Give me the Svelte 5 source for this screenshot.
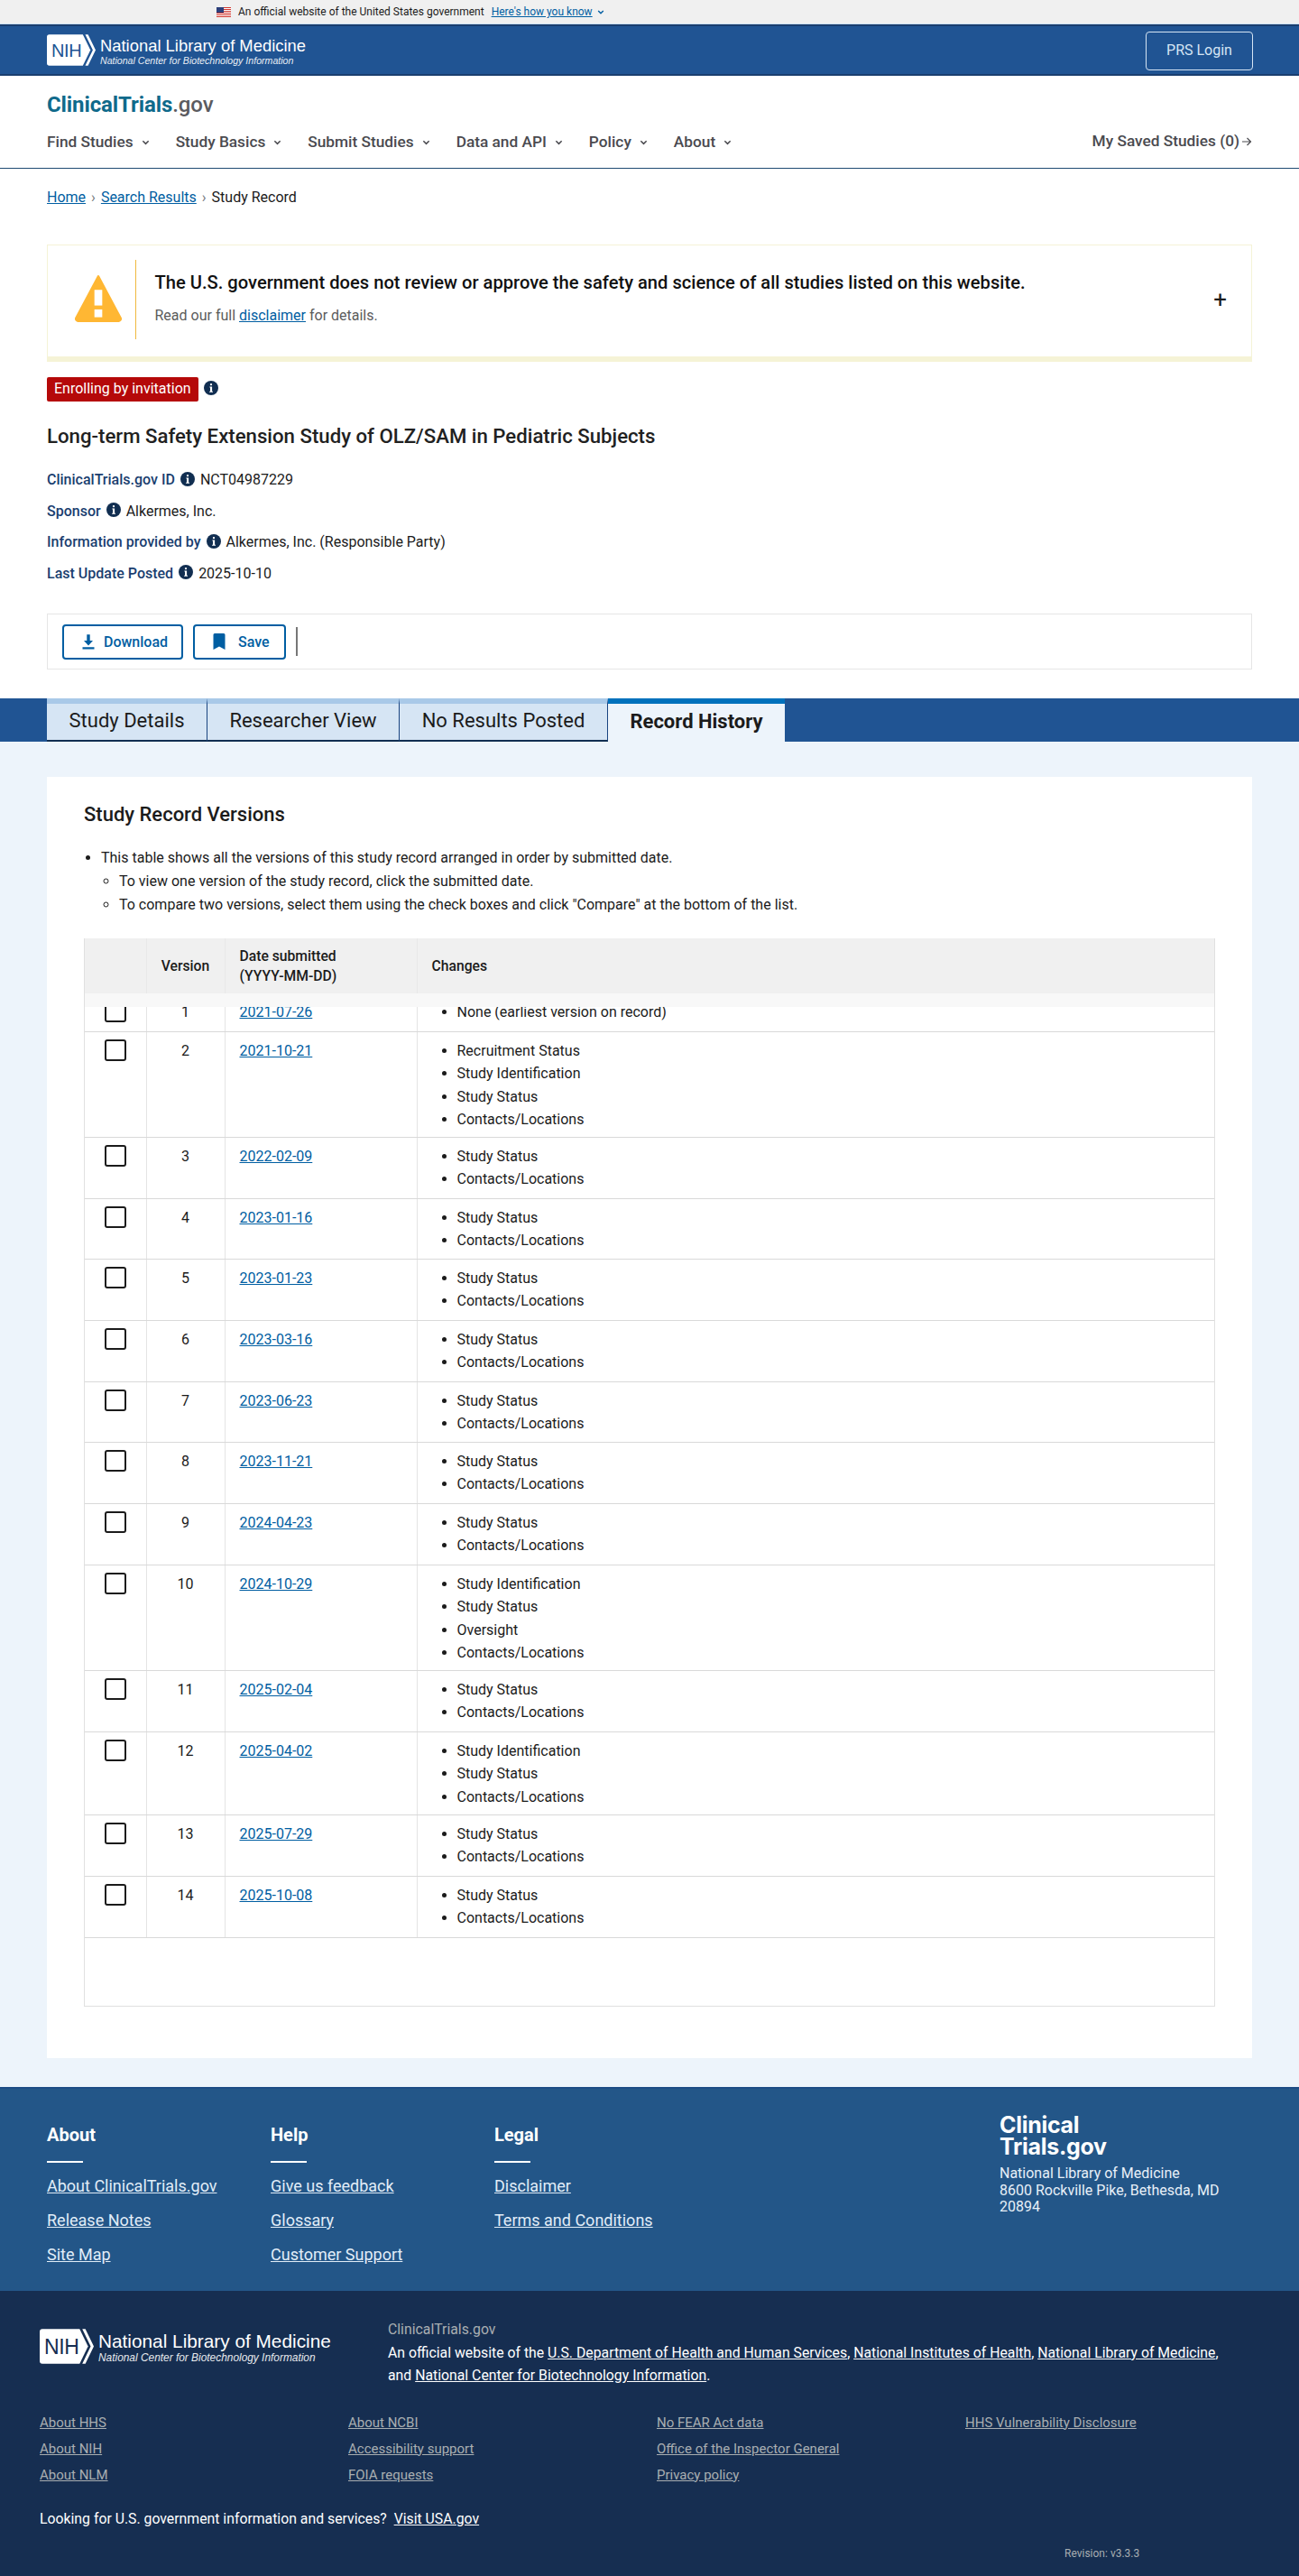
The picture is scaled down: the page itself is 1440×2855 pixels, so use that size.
<script>
  const navItems = ['Find Studies', 'Study Basics', 'Submit Studies', 'Data and API', 'Policy', 'About'];
  const meta = [
    ['ClinicalTrials.gov ID', 'NCT04987229'],
    ['Sponsor', 'Alkermes, Inc.'],
    ['Information provided by', 'Alkermes, Inc. (Responsible Party)'],
    ['Last Update Posted', '2025-10-10']
  ];
  const tabs = ['Study Details', 'Researcher View', 'No Results Posted'];
  const SC = ['Study Status', 'Contacts/Locations'];
  const rows = [
    ['2021-07-26', ['None (earliest version on record)']],
    ['2021-10-21', ['Recruitment Status', 'Study Identification', 'Study Status', 'Contacts/Locations']],
    ['2022-02-09', SC],
    ['2023-01-16', SC],
    ['2023-01-23', SC],
    ['2023-03-16', SC],
    ['2023-06-23', SC],
    ['2023-11-21', SC],
    ['2024-04-23', SC],
    ['2024-10-29', ['Study Identification', 'Study Status', 'Oversight', 'Contacts/Locations']],
    ['2025-02-04', SC],
    ['2025-04-02', ['Study Identification', 'Study Status', 'Contacts/Locations']],
    ['2025-07-29', SC],
    ['2025-10-08', SC]
  ];
  const footCols = [
    ['About', ['About ClinicalTrials.gov', 'Release Notes', 'Site Map']],
    ['Help', ['Give us feedback', 'Glossary', 'Customer Support']],
    ['Legal', ['Disclaimer', 'Terms and Conditions']]
  ];
  const govCols = [
    ['About HHS', 'About NIH', 'About NLM'],
    ['About NCBI', 'Accessibility support', 'FOIA requests'],
    ['No FEAR Act data', 'Office of the Inspector General', 'Privacy policy'],
    ['HHS Vulnerability Disclosure']
  ];
</script>

{#snippet info()}
  <svg class="info" viewBox="0 0 16 16" aria-hidden="true">
    <circle cx="8" cy="8" r="8" fill="#112e51" />
    <rect x="6.9" y="3" width="2.2" height="2.2" rx="1" fill="#fff" />
    <path d="M6.4 6.5h2.7v5.2h.9v1.1H6.1v-1.1h.9V7.6h-.6z" fill="#fff" />
  </svg>
{/snippet}

{#snippet chevron()}
  <svg class="chev" viewBox="0 0 10 6" aria-hidden="true">
    <path d="M1.5 1 5 4.5 8.5 1" fill="none" stroke="currentColor" stroke-width="1.7" />
  </svg>
{/snippet}

{#snippet nihLogo()}
  <div class="nihlogo">
    <svg class="nihmark" viewBox="0 0 61 39" aria-hidden="true">
      <path d="M3 0h42l9.500 19.500L45 39H3a3 3 0 0 1-3-3V3a3 3 0 0 1 3-3z" fill="#fff" />
      <path d="M48 0h3.500L61 19.500 51.500 39H48l9.500-19.500z" fill="#fff" />
    </svg>
    <span class="nihword">NIH</span>
    <div class="nihtext">
      <div class="nlm">National Library of Medicine</div>
      <div class="ncbi">National Center for Biotechnology Information</div>
    </div>
  </div>
{/snippet}

<div class="page">
  <div class="gov">
    <svg class="flag" viewBox="0 0 16 11" aria-hidden="true">
      <rect width="16" height="11" fill="#fff" />
      <path d="M0 0h16v1H0zM0 2h16v1H0zM0 4h16v1H0zM0 6h16v1H0zM0 8h16v1H0zM0 10h16v1H0z" fill="#d0342c" />
      <rect width="8" height="6" fill="#2c3f7a" />
    </svg>
    <span>An official website of the United States government</span>
    <a href="#x" class="govlink">Here's how you know</a>
    <span class="govchev">{@render chevron()}</span>
  </div>

  <div class="nih">
    {@render nihLogo()}
    <a href="#x" class="prs">PRS Login</a>
  </div>

  <header class="site">
    <div class="brand"><span class="ct">ClinicalTrials</span><span class="dotgov">.gov</span></div>
    <nav class="nav">
      <div class="navitems">
        {#each navItems as n}
          <a href="#x" class="navitem">{n}{@render chevron()}</a>
        {/each}
      </div>
      <a href="#x" class="saved">My Saved Studies (0)
        <svg class="arrow" viewBox="0 0 12 12" aria-hidden="true"><path d="M1 6h9.500M6.500 2l4 4-4 4" fill="none" stroke="currentColor" stroke-width="1.200" /></svg>
      </a>
    </nav>
  </header>

  <div class="crumbs">
    <a href="#x">Home</a><span class="sep">›</span><a href="#x">Search Results</a><span class="sep">›</span><span>Study Record</span>
  </div>

  <section class="warn">
    <svg class="tri" viewBox="2 2 48 48" aria-hidden="true">
      <path d="M26 3 49 46a2.500 2.500 0 0 1-2 3H5a2.500 2.500 0 0 1-2-3z" fill="#ffb733" stroke="#ffb733" stroke-width="2" stroke-linejoin="round" />
      <rect x="22" y="17" width="8" height="16" fill="#fff" />
      <rect x="22" y="37" width="8" height="8" fill="#fff" />
    </svg>
    <div class="warnbar"></div>
    <div class="warntext">
      <div class="warnhead">The U.S. government does not review or approve the safety and science of all studies listed on this website.</div>
      <div class="warnsub">Read our full <a href="#x">disclaimer</a> for details.</div>
    </div>
    <div class="plus">+</div>
  </section>

  <div class="status"><span class="badge">Enrolling by invitation</span>{@render info()}</div>

  <h1 class="title">Long-term Safety Extension Study of OLZ/SAM in Pediatric Subjects</h1>

  <div class="meta">
    {#each meta as m}
      <div class="metarow"><span class="metalabel">{m[0]}</span>{@render info()}<span>{m[1]}</span></div>
    {/each}
  </div>

  <div class="tools">
    <button class="btn dl">
      <svg viewBox="0 0 16 16" aria-hidden="true" preserveAspectRatio="none"><path d="M6.300 1h3.400v6H13L8 12 3 7h3.300zM1.500 13.600h13V15.500h-13z" fill="currentColor" /></svg>
      Download
    </button>
    <button class="btn sv">
      <svg viewBox="0 0 16 20" aria-hidden="true"><path d="M1.500 2.500A1.500 1.500 0 0 1 3 1h10a1.500 1.500 0 0 1 1.500 1.500V19L8 15.500 1.500 19z" fill="currentColor" /></svg>
      Save
    </button>
    <div class="toolsep"></div>
  </div>

  <div class="tabband">
    {#each tabs as t}
      <a href="#x" class="tab">{t}</a>
    {/each}
    <a href="#x" class="tab active">Record History</a>
  </div>

  <main class="main">
    <section class="card">
      <h2>Study Record Versions</h2>
      <ul class="intro">
        <li>This table shows all the versions of this study record arranged in order by submitted date.
          <ul>
            <li>To view one version of the study record, click the submitted date.</li>
            <li>To compare two versions, select them using the check boxes and click "Compare" at the bottom of the list.</li>
          </ul>
        </li>
      </ul>
      <div class="tablewrap">
        <table>
          <colgroup><col class="c1" /><col class="c2" /><col class="c3" /><col /></colgroup>
          <thead>
            <tr>
              <th></th>
              <th class="ctr">Version</th>
              <th>Date submitted<br />(YYYY-MM-DD)</th>
              <th>Changes</th>
            </tr>
          </thead>
          <tbody>
            {#each rows as r, i}
              <tr class={'n' + r[1].length}>
                <td><span class="check"></span></td>
                <td class="ctr">{i + 1}</td>
                <td><a href="#x">{r[0]}</a></td>
                <td>
                  <ul class="changes">
                    {#each r[1] as c}<li>{c}</li>{/each}
                  </ul>
                </td>
              </tr>
            {/each}
          </tbody>
        </table>
        <div class="strip"></div>
      </div>
    </section>
  </main>

  <footer class="foot">
    <div class="footcols">
      {#each footCols as col}
        <div class="footcol">
          <div class="foothead">{col[0]}</div>
          <div class="footrule"></div>
          {#each col[1] as l}<a href="#x">{l}</a>{/each}
        </div>
      {/each}
    </div>
    <div class="footaddr">
      <div class="footlogo">Clinical<br />Trials.gov</div>
      <div class="addr">National Library of Medicine<br />8600 Rockville Pike, Bethesda, MD<br />20894</div>
    </div>
  </footer>

  <footer class="dark">
    <div class="darktop">
      <div class="darklogo">{@render nihLogo()}</div>
      <div class="darkabout">
        <div class="muted">ClinicalTrials.gov</div>
        <div>An official website of the <a href="#x">U.S. Department of Health and Human Services</a>, <a href="#x">National Institutes of Health</a>, <a href="#x">National Library of Medicine</a>,</div>
        <div>and <a href="#x">National Center for Biotechnology Information</a>.</div>
      </div>
    </div>
    <div class="darklinks">
      {#each govCols as col}
        <div class="darkcol">
          {#each col as l}<a href="#x">{l}</a>{/each}
        </div>
      {/each}
    </div>
    <div class="looking">Looking for U.S. government information and services? &nbsp;<a href="#x">Visit USA.gov</a></div>
    <div class="rev">Revision: v3.3.3</div>
  </footer>
</div>

<style>
  :global(body) { margin: 0; background: #fff; }
  :global(*) { box-sizing: border-box; }
  .page { font-family: Roboto, "Liberation Sans", sans-serif; font-size: 16px; color: #1b1b1b; width: 1440px; line-height: 1.6; }
  a { color: #005ea2; }

  .gov { height: 27px; background: #f0f0f0; border-bottom: 1px solid #cfe2f3; display: flex; align-items: center; padding-left: 240px; font-size: 12px; line-height: 1; }
  .flag { width: 16px; height: 11px; margin-right: 8px; }
  .govlink { margin-left: 8px; }
  .govchev { margin-left: 5px; color: #005ea2; display: flex; }
  .govchev .chev { width: 8px; height: 5px; margin: 0; }

  .nih { height: 57px; background: #205493; border-top: 2px solid #1a3e6f; border-bottom: 2px solid #1a3e6f; padding: 0 51px 0 52px; display: flex; align-items: center; justify-content: space-between; }
  .nihlogo { position: relative; display: flex; align-items: center; color: #fff; }
  .nihmark { width: 54px; height: 35px; display: block; }
  .nihword { position: absolute; left: 5px; top: 50%; transform: translateY(-50%); font-family: "Liberation Sans", sans-serif; font-size: 20px; color: #205493; letter-spacing: -0.4px; line-height: 1; }
  .nihtext { margin-left: 5px; padding-top: 4px; line-height: 1; }
  .nlm { font-family: "Liberation Sans", sans-serif; font-size: 18.400px; }
  .ncbi { font-family: "Liberation Sans", sans-serif; font-size: 10.600px; font-style: italic; margin-top: 2px; opacity: 0.9; }
  .prs { width: 119px; height: 43px; border: 1px solid #d6e5f4; border-radius: 4px; color: #d6e5f4; display: flex; align-items: center; justify-content: center; text-decoration: none; margin-top: 1px; }

  .site { height: 103px; border-bottom: 1px solid #1f4a72; padding: 0 52px; }
  .brand { padding-top: 15px; height: 61px; font-size: 24px; font-weight: 700; line-height: 34px; letter-spacing: -0.1px; }
  .ct { color: #0f6a8b; }
  .dotgov { color: #5b5b5f; font-weight: 500; }
  .nav { display: flex; justify-content: space-between; align-items: center; height: 25px; font-size: 17.280px; }
  .navitems { display: flex; gap: 0; }
  .navitem { color: #4a4a4f; font-weight: 500; text-decoration: none; display: flex; align-items: center; margin-right: 29px; }
  .chev { width: 9px; height: 6px; margin-left: 9px; }
  .saved { color: #4a4a4f; font-weight: 500; text-decoration: none; display: flex; align-items: center; margin-top: -2px; }
  .arrow { width: 12px; height: 12px; margin-left: 2px; }

  .crumbs { padding: 19px 52px 0; height: 84px; font-size: 16px; display: flex; align-items: flex-start; }
  .sep { color: #71767a; margin: 0 6px; }

  .warn { margin: 0 52px; height: 130px; border: 1px solid #f5f3d6; border-bottom: 6px solid #f5f3d6; display: flex; align-items: center; padding: 0 27px 4px 30px; position: relative; }
  .tri { width: 52px; height: 52px; margin-top: -2px; }
  .warnbar { width: 1px; height: 88px; background: #f0b93f; margin: 0 20.500px 0 15px; }
  .warntext { flex: 1; }
  .warnhead { font-size: 20.150px; font-weight: 500; color: #111; line-height: 26px; margin-top: -1px; }
  .warnsub { color: #5c5c5c; margin-top: 11px; line-height: 26px; }
  .plus { font-size: 26px; line-height: 1; }

  .status { margin: 17px 52px 0; display: flex; align-items: flex-start; }
  .badge { background: #b50909; color: #fff; border-radius: 2px; height: 27px; line-height: 26px; padding: 0 8px; font-size: 16px; }
  .info { width: 16px; height: 16px; flex: none; margin: 4px 6px 0; }

  .title { margin: 21px 52px 0; font-size: 22.200px; font-weight: 500; line-height: 34px; color: #212121; }

  .meta { margin: 15px 52px 0; }
  .metarow { height: 34.500px; display: flex; align-items: center; }
  .metarow .info { margin: -3px 6px 0; }
  .metalabel { color: #1a3e6f; font-weight: 500; }

  .tools { margin: 27px 52px 0; height: 62px; border: 1px solid #e6e6e6; display: flex; align-items: center; padding-left: 16px; gap: 11px; }
  .btn { font: 500 16px Roboto, sans-serif; color: #005ea2; background: #fff; border: 2px solid #005ea2; border-radius: 4px; height: 39px; display: flex; align-items: center; justify-content: center; gap: 9px; padding: 0; }
  .btn svg { fill: currentColor; }
  .dl { width: 134px; padding-left: 4px; }
  .dl svg { width: 16px; height: 18px; }
  .sv { width: 103px; gap: 12.500px; padding-left: 3px; }
  .sv svg { width: 16px; height: 20px; }
  .toolsep { width: 2px; height: 32px; background: #777; }

  .tabband { margin-top: 32px; height: 48px; background: #205493; display: flex; padding-left: 52px; }
  .tab { background: #d6e5f4; border-top: 6px solid #a9c9e8; border-bottom: 2px solid #112e51; border-right: 1px solid #1a4480; color: #1b1b1b; font-size: 22px; text-decoration: none; display: flex; align-items: center; justify-content: center; padding-bottom: 2px; height: 48px; }
  .tab:nth-child(1) { width: 178px; }
  .tab:nth-child(2) { width: 213px; }
  .tab:nth-child(3) { width: 231px; }
  .tab.active { width: 196px; background: #edf4fb; border-top-color: #0071bc; border-bottom: 0; border-right: 0; font-weight: 700; }

  .main { background: #edf4fb; padding: 39px 52px 32px; }
  .card { background: #fff; height: 1420px; padding: 25px 41px 0; }
  h2 { margin: 0; font-size: 22px; font-weight: 500; line-height: 34px; color: #1b1b1b; }
  .intro { margin: 18px 0 0; padding-left: 19px; line-height: 26px; }
  .intro ul { margin: 0; padding-left: 20px; }

  .tablewrap { position: relative; margin-top: 24px; height: 1184px; border: 1px solid #e0e0e0; border-top: 0; overflow: hidden; }
  table { border-collapse: collapse; table-layout: fixed; width: 100%; }
  .c1 { width: 68px; }
  .c2 { width: 87px; }
  .c3 { width: 213px; }
  th { background: #f0f0f0; height: 61px; text-align: left; font-weight: 500; font-size: 15.700px; line-height: 22px; padding: 0 16px; border-right: 1px solid #e8e8e8; color: #1b1b1b; }
  th:last-child { border-right: 0; }
  td { vertical-align: top; padding: 8px 16px 0; border-right: 1px solid #e4e4e4; border-bottom: 1px solid #d9d9d9; line-height: 25.600px; }
  td:last-child { border-right: 0; }
  td:first-child { padding: 8px 0 0 22px; }
  .n1 td { height: 42px; }
  .n2 td { height: 68px; }
  tbody tr:nth-child(4) td, tbody tr:nth-child(7) td { height: 67px; }
  .n3 td { height: 92px; }
  .n4 td { height: 117px; }
  .ctr { text-align: center; padding-left: 0; padding-right: 0; }
  .check { display: block; width: 24px; height: 24px; border: 2px solid #1b1b1b; border-radius: 3px; background: #fff; }
  .changes { margin: 0; padding-left: 28px; }
  .strip { position: absolute; left: 0; right: 0; top: 61px; height: 15px; background: #f8f8f8; }

  .foot { height: 226px; background: #235688; border-top: 2px solid #1d4c85; display: flex; padding: 0 52px; color: #fff; }
  .footcols { display: flex; width: 1056px; }
  .footcol { width: 248px; display: flex; flex-direction: column; align-items: flex-start; padding-top: 34px; }
  .foothead { font-size: 20px; font-weight: 700; line-height: 34px; }
  .footrule { width: 40px; height: 1.500px; background: #fff; margin: 12px 0 7.500px; }
  .footcol a { color: #e1edf8; font-size: 18px; line-height: 38px; }
  .footaddr { padding-top: 28px; }
  .footlogo { font-family: Inter, sans-serif; font-weight: 700; font-size: 25px; line-height: 24px; letter-spacing: -0.3px; }
  .addr { margin-top: 9px; font-size: 16px; line-height: 18.500px; color: #e8f0f8; width: 280px; }

  .dark { height: 316px; background: #162e51; padding: 0 44px; color: #fff; position: relative; }
  .darktop { display: flex; padding-top: 30px; }
  .darklogo { width: 386px; flex: none; padding-top: 12px; }
  .darklogo .nihmark { width: 60px; height: 39px; }
  .darklogo .nihword { font-size: 23px; left: 5px; color: #162e51; }
  .darklogo .nlm { font-size: 20.800px; }
  .darklogo .ncbi { font-size: 11.900px; }
  .darkabout { line-height: 25.500px; font-size: 15.800px; white-space: nowrap; }
  .darkabout a { color: #fff; }
  .muted { color: #a9aeb1; }
  .darklinks { display: flex; margin-top: 25px; }
  .darkcol { width: 342px; flex: none; display: flex; flex-direction: column; align-items: flex-start; }
  .darkcol a { color: #a9aeb1; font-size: 15px; line-height: 29px; }
  .looking { margin-top: 21px; font-size: 15.800px; color: #fff; }
  .looking a { color: #fff; }
  .rev { position: absolute; left: 1180px; top: 282px; font-size: 12px; color: #a9aeb1; }
</style>
